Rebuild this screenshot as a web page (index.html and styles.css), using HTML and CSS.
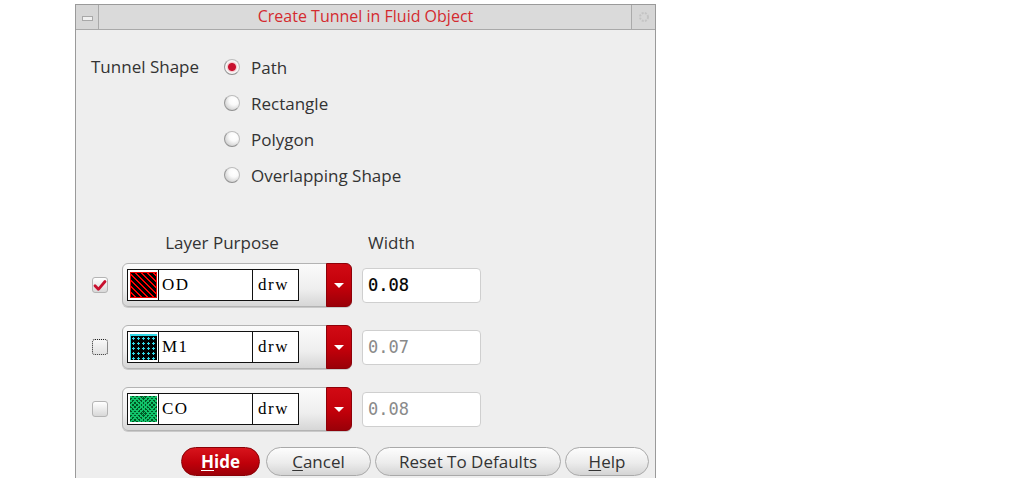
FILE: index.html
```html
<!DOCTYPE html>
<html>
<head>
<meta charset="utf-8">
<link rel="stylesheet" href="styles.css">
</head>
<body>
<div class="window">
  <div class="titlebar">
    <div class="tb-btn tb-left"><span class="dash"></span></div>
    <div class="title">Create Tunnel in Fluid Object</div>
    <div class="tb-btn tb-right">
      <svg width="12" height="12" viewBox="0 0 12 12"><circle cx="6" cy="6" r="4" fill="none" stroke="#c4c4c4" stroke-width="2" stroke-dasharray="2 1.2"/></svg>
    </div>
  </div>
  <div class="content">
    <div class="shape">
      <div class="shape-label">Tunnel Shape</div>
      <div class="radios">
        <div class="radio"><span class="rdot on"></span><span>Path</span></div>
        <div class="radio"><span class="rdot"></span><span>Rectangle</span></div>
        <div class="radio"><span class="rdot"></span><span>Polygon</span></div>
        <div class="radio"><span class="rdot"></span><span>Overlapping Shape</span></div>
      </div>
    </div>
    <div class="headers">
      <span class="h-layer">Layer Purpose</span>
      <span class="h-width">Width</span>
    </div>
    <div class="row">
      <span class="check checked"><svg width="15" height="15" viewBox="0 0 14 14"><path d="M2 7.2 L5.4 10.8 L12 3" fill="none" stroke="#c8102e" stroke-width="2.8" stroke-linecap="round" stroke-linejoin="round"/></svg></span>
      <div class="combo">
        <div class="cells">
          <span class="swatch-cell"><span class="swatch sw-od"></span></span>
          <span class="name">OD</span>
          <span class="purpose">drw</span>
        </div>
        <span class="drop"><span class="tri"></span></span>
      </div>
      <div class="field active">0.08</div>
    </div>
    <div class="row">
      <span class="check focus"></span>
      <div class="combo">
        <div class="cells">
          <span class="swatch-cell"><span class="swatch sw-m1"></span></span>
          <span class="name">M1</span>
          <span class="purpose">drw</span>
        </div>
        <span class="drop"><span class="tri"></span></span>
      </div>
      <div class="field">0.07</div>
    </div>
    <div class="row">
      <span class="check"></span>
      <div class="combo">
        <div class="cells">
          <span class="swatch-cell"><span class="swatch sw-co"></span></span>
          <span class="name">CO</span>
          <span class="purpose">drw</span>
        </div>
        <span class="drop"><span class="tri"></span></span>
      </div>
      <div class="field">0.08</div>
    </div>
    <div class="buttons">
      <span class="btn btn-hide"><u>H</u>ide</span>
      <span class="btn btn-cancel"><u>C</u>ancel</span>
      <span class="btn btn-reset">Reset To Defaults</span>
      <span class="btn btn-help"><u>H</u>elp</span>
    </div>
  </div>
</div>
</body>
</html>
```

FILE: styles.css
```css
* { box-sizing: border-box; }
html, body { margin: 0; padding: 0; background: #ffffff; }
body { font-family: "Open Sans", "DejaVu Sans", sans-serif; color: #333; }

.window {
  margin: 4px 0 0 75px;
  width: 581px;
  height: 474px;
  border: 1px solid #9a9a9a;
  border-bottom: none;
  background: #eeeeee;
  display: flex;
  flex-direction: column;
}

.titlebar {
  height: 25px;
  display: flex;
  align-items: stretch;
  background: #dadada;
  border-bottom: 1px solid #a9a9a9;
  position: relative;
}
.tb-btn {
  width: 23px;
  display: flex;
  align-items: center;
  justify-content: center;
  background: #d6d6d6;
}
.tb-left { border-right: 1px solid #aaaaaa; }
.tb-right { border-left: 1px solid #aaaaaa; margin-left: auto; width: 24px; }
.dash {
  width: 11px;
  height: 5px;
  background: #f0f0f0;
  border: 1px solid #a8a8a8;
  margin-top: 2px;
}
.title {
  position: absolute;
  left: 0; right: 0; top: 0; bottom: 0;
  text-align: center;
  line-height: 23px;
  font-size: 16px;
  color: #d42a2f;
  pointer-events: none;
}

.content {
  padding: 19px 0 0 15px;
  flex: 1;
  display: flex;
  flex-direction: column;
}

.shape { display: flex; }
.shape-label {
  width: 133px;
  font-size: 17px;
  line-height: 36px;
  color: #333;
}
.radios { display: flex; flex-direction: column; }
.radio {
  height: 36px;
  display: flex;
  align-items: center;
  font-size: 17px;
  color: #333;
}
.rdot {
  width: 16px;
  height: 16px;
  border-radius: 50%;
  margin-right: 11px;
  border: 1px solid #bdbdbd;
  border-bottom-color: #8f8f8f;
  border-left-color: #969696;
  background: radial-gradient(circle at 64% 32%, #ffffff 0%, #fafafa 35%, #d8d8d8 70%, #a0a0a0 100%);
}
.rdot.on {
  background: radial-gradient(circle at 50% 50%, #c8102e 0 3.5px, #f3c9cd 4.5px, #fafafa 6px, #c9c9c9 100%);
}

.headers {
  margin-top: 37px;
  height: 24px;
  display: flex;
  align-items: center;
  font-size: 17px;
  color: #333;
}
.h-layer { margin-left: 31px; width: 200px; text-align: center; }
.h-width { margin-left: 46px; }

.row {
  display: flex;
  align-items: center;
  height: 44px;
  margin-top: 9px;
}
.row + .row { margin-top: 18px; }

.check {
  width: 16px;
  height: 16px;
  margin-left: 1px;
  border: 1px solid #b4b4b4;
  border-radius: 3px;
  background: linear-gradient(#ffffff, #d8d8d8);
  display: flex;
  align-items: center;
  justify-content: center;
}
.check.focus { border: 1px dotted #222; background: linear-gradient(#f8f8f8, #e2e2e2); }

.combo {
  margin-left: 14px;
  width: 230px;
  height: 44px;
  border: 1px solid #b3b3b3;
  border-radius: 6px;
  background: linear-gradient(#fbfbfb 0%, #eeeeee 60%, #d6d6d6 100%);
  display: flex;
  align-items: center;
  padding-left: 4px;
  box-shadow: 0 1px 0 #c9c9c9;
}
.cells {
  width: 172px;
  height: 32px;
  display: flex;
  border: 1px solid #111;
  background: #ffffff;
}
.swatch-cell {
  width: 31px;
  border-right: 1px solid #111;
  display: flex;
  align-items: center;
  justify-content: center;
}
.swatch { width: 27px; height: 26px; display: block; }
.sw-od {
  background: repeating-linear-gradient(45deg, #000 0 2.5px, #ff0000 2.5px 4.2px);
  border: 1px solid #e00;
}
.sw-m1 {
  background-color: #000;
  background-image: radial-gradient(circle, #2fd6e6 0 1px, transparent 1.3px);
  background-size: 5px 5px;
  border-top: 2px solid #2fd6e6;
  border-left: 1px solid #2fd6e6;
}
.sw-co {
  background-color: #052;
  background-image:
    repeating-linear-gradient(45deg, #11c26a 0 1.2px, transparent 1.2px 3px),
    repeating-linear-gradient(-45deg, #11c26a 0 1.2px, transparent 1.2px 3px);
}
.name, .purpose {
  font-family: "Liberation Serif", "DejaVu Serif", serif;
  font-size: 17px;
  letter-spacing: 1.5px;
  line-height: 30px;
  color: #000;
}
.name {
  width: 94px;
  border-right: 1px solid #111;
  padding-left: 3px;
}
.purpose {
  flex: 1;
  padding-left: 5px;
}
.drop {
  margin-left: auto;
  width: 26px;
  height: 44px;
  margin-top: -1px;
  margin-bottom: -1px;
  margin-right: -1px;
  border-radius: 0 6px 6px 0;
  background: linear-gradient(#d10a14 0%, #c2000a 55%, #9a0008 100%);
  border: 1px solid #8e0008;
  display: flex;
  align-items: center;
  justify-content: center;
}
.tri {
  width: 0;
  height: 0;
  border-left: 5px solid transparent;
  border-right: 5px solid transparent;
  border-top: 5px solid #ffffff;
}

.field {
  margin-left: 10px;
  width: 119px;
  height: 35px;
  border: 1px solid #cfcfcf;
  border-radius: 4px;
  background: #ffffff;
  font-family: "DejaVu Sans Mono", monospace;
  font-size: 17px;
  line-height: 33px;
  padding-left: 5px;
  color: #8a8a8a;
}
.field.active { color: #000; -webkit-text-stroke: 0.2px #000; }

.buttons {
  margin-top: 16px;
  display: flex;
  justify-content: flex-end;
  padding-right: 6px;
  gap: 4px;
}
.btn {
  height: 29px;
  border-radius: 15px;
  border: 1px solid #a9a9a9;
  background: linear-gradient(#fdfdfd 0%, #ececec 55%, #d4d4d4 100%);
  font-size: 17px;
  line-height: 27px;
  text-align: center;
  color: #333;
}
.btn u { text-decoration: underline; text-underline-offset: 2px; }
.btn-hide {
  width: 79px;
  margin-right: 2px;
  background: linear-gradient(#d8141c 0%, #c0000a 55%, #9c0008 100%);
  border-color: #8a0006;
  color: #ffffff;
  font-weight: bold;
}
.btn-cancel { width: 105px; }
.btn-reset { width: 186px; }
.btn-help { width: 84px; }
```
